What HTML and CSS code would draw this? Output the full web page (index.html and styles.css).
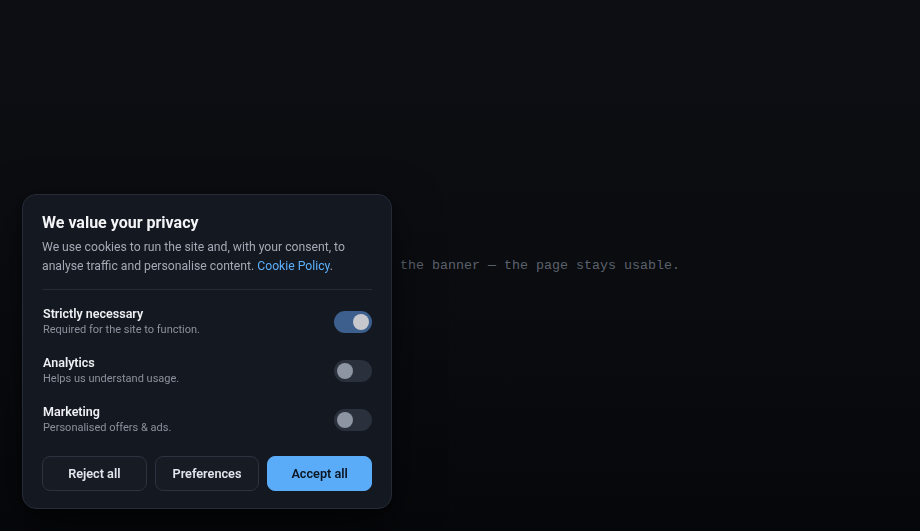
FILE: index.html
```html
<!DOCTYPE html>
<html lang="en">
<head>
<meta charset="utf-8">
<title>Cookie consent</title>
<link rel="stylesheet" href="styles.css">
</head>
<body>
<main class="page">
  <p class="page-note">You can scroll past the banner — the page stays usable.</p>
</main>

<section class="banner" aria-label="Cookie consent">
  <h2 class="banner-title">We value your privacy</h2>
  <p class="banner-text">We use cookies to run the site and, with your consent, to analyse traffic and personalise content. <a href="#" class="banner-link">Cookie Policy</a>.</p>
  <hr class="divider">
  <ul class="prefs">
    <li class="pref">
      <div class="pref-info">
        <span class="pref-name">Strictly necessary</span>
        <span class="pref-desc">Required for the site to function.</span>
      </div>
      <span class="toggle toggle-on"><span class="knob"></span></span>
    </li>
    <li class="pref">
      <div class="pref-info">
        <span class="pref-name">Analytics</span>
        <span class="pref-desc">Helps us understand usage.</span>
      </div>
      <span class="toggle"><span class="knob"></span></span>
    </li>
    <li class="pref">
      <div class="pref-info">
        <span class="pref-name">Marketing</span>
        <span class="pref-desc">Personalised offers &amp; ads.</span>
      </div>
      <span class="toggle"><span class="knob"></span></span>
    </li>
  </ul>
  <div class="actions">
    <button class="btn btn-ghost">Reject all</button>
    <button class="btn btn-ghost">Preferences</button>
    <button class="btn btn-primary">Accept all</button>
  </div>
</section>
</body>
</html>
```
FILE: styles.css
```css
* { box-sizing: border-box; }
html, body { margin: 0; height: 100%; }
body {
  background: linear-gradient(180deg, #0c0e13 0%, #0a0c10 55%, #06070a 100%);
  font-family: Roboto, "Noto Sans", "Liberation Sans", sans-serif;
  color: #e6e8ec;
  overflow: hidden;
}
.page {
  height: 100vh;
  display: flex;
  align-items: center;
  justify-content: center;
}
.page-note {
  margin: 0;
  font-family: "Liberation Mono", "DejaVu Sans Mono", monospace;
  font-size: 13.33px;
  line-height: 16px;
  color: #5b616c;
}
.banner {
  position: fixed;
  left: 22px;
  bottom: 22px;
  width: 370px;
  padding: 18px 19px 17px;
  background: #141821;
  border: 1px solid #262b37;
  border-radius: 14px;
  box-shadow: 0 18px 48px rgba(0, 0, 0, 0.55), 0 2px 8px rgba(0, 0, 0, 0.3);
}
.banner-title {
  margin: 0;
  font-size: 16px;
  line-height: 20px;
  font-weight: 700;
  color: #f3f4f6;
}
.banner-text {
  margin: 5px 0 0;
  font-size: 12.2px;
  line-height: 19px;
  color: #a3a9b4;
}
.banner-link {
  color: #5cb0fb;
  text-decoration: none;
}
.divider {
  margin: 13px 0 0;
  border: 0;
  border-top: 1px solid #262b36;
  height: 0;
}
.prefs {
  list-style: none;
  margin: 15px 0 0;
  padding: 0 0 0 1px;
  display: flex;
  flex-direction: column;
  gap: 16px;
}
.pref {
  display: flex;
  align-items: center;
  justify-content: space-between;
}
.pref-info {
  display: flex;
  flex-direction: column;
}
.pref-name {
  font-size: 12.5px;
  line-height: 17px;
  font-weight: 600;
  color: #eef0f3;
}
.pref-desc {
  font-size: 11px;
  line-height: 16px;
  color: #8b919c;
}
.toggle {
  width: 38px;
  height: 22px;
  border-radius: 11px;
  background: #2a303c;
  display: flex;
  align-items: center;
  padding: 0 3px;
}
.knob {
  width: 16px;
  height: 16px;
  border-radius: 50%;
  background: #8d94a2;
}
.toggle-on {
  background: #3c5f8e;
  justify-content: flex-end;
}
.toggle-on .knob {
  background: #c6c8cd;
}
.actions {
  margin-top: 20px;
  display: grid;
  grid-template-columns: 1fr 1fr 1fr;
  gap: 8px;
}
.btn {
  height: 35px;
  border-radius: 8px;
  font-family: inherit;
  font-size: 12.7px;
  font-weight: 600;
  cursor: pointer;
}
.btn-ghost {
  background: #171b24;
  border: 1px solid #2c3240;
  color: #e3e6eb;
}
.btn-primary {
  background: #5aacf8;
  border: 1px solid #5aacf8;
  color: #0c1522;
}
```
